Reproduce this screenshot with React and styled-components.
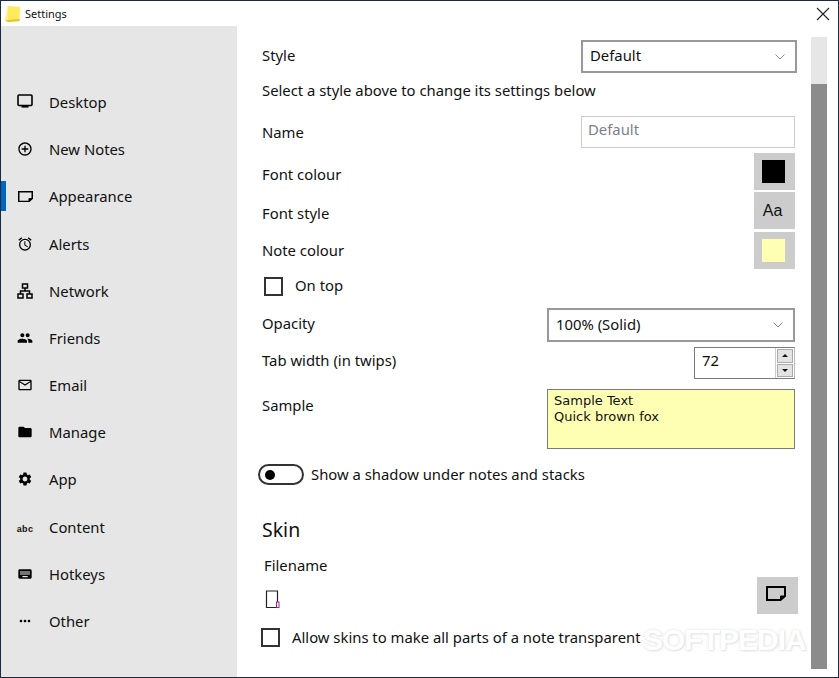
import React from "react";
import styled, { createGlobalStyle } from "styled-components";
import {
  MdAddCircleOutline, MdOutlineAlarm, MdPeople, MdMailOutline,
  MdFolder, MdSettings, MdKeyboard, MdMoreHoriz,
} from "react-icons/md";

const Global = createGlobalStyle`
  html, body { margin: 0; padding: 0; background: #fff; }
  body { font-family: "Noto Sans", "Open Sans", sans-serif; font-size: 14.85px; color: #111; }
`;

const Window = styled.div`
  position: relative; width: 839px; height: 678px; box-sizing: border-box;
  border: 1px solid #1b2a41; background: #fff;
  display: flex; flex-direction: column; overflow: hidden;
`;
const TitleBar = styled.header`
  height: 25px; flex: none; display: flex; align-items: center; padding-left: 3px; gap: 4px; font-size: 11px;
`;
const TitleText = styled.span`flex: 1;`;
const CloseButton = styled.span`
  width: 30px; display: flex; justify-content: center; color: #222; line-height: 0;
`;
const Body = styled.div`flex: 1; display: flex; min-height: 0;`;
const Sidebar = styled.nav`
  width: 236px; flex: none; background: #e6e6e6; padding-top: 52.4px; box-sizing: border-box;
  display: grid; grid-auto-rows: 47.2px; align-content: start;
`;
const NavItem = styled.div`
  position: relative; display: flex; align-items: center; padding-left: 16px; gap: 16px;
  ${p => p.$active && `
    &::before { content: ""; position: absolute; left: 0; top: 8px; width: 5px; height: 30px; background: #0067c0; }
  `}
`;
const NavIcon = styled.span`
  width: 16px; height: 18px; display: flex; align-items: center; justify-content: center; color: #000; font-size: 18px;
`;
const AbcGlyph = styled.span`
  font-family: "Liberation Sans", sans-serif; font-weight: 700; font-size: 9px; letter-spacing: 0.3px; line-height: 1; color: #111; margin-top: 5px;
`;
const Main = styled.main`flex: 1; display: flex; min-width: 0;`;
const Content = styled.div`
  flex: 1; padding: 14px 16px 0 25px; display: flex; flex-direction: column; min-width: 0;
`;
const Row = styled.div`
  display: flex; align-items: center; justify-content: space-between;
  height: ${p => p.$h}px; margin-top: ${p => p.$mt || 0}px; flex: none;
`;
const Label = styled.span`
  display: block; white-space: nowrap; margin-top: ${p => p.$nudge || 0}px;
`;
const TopLabel = styled(Label)`align-self: flex-start; margin-top: 6px;`;
const Select = styled.div`
  box-sizing: border-box; width: ${p => p.$w}px; height: 100%; border: 2px solid #999;
  margin-right: ${p => p.$over ? -2 : 0}px;
  display: flex; align-items: center; justify-content: space-between; padding: 0 10px 0 7px;
`;
const SelectText = styled.span`padding-bottom: 3px;`;
const TextInput = styled.div`
  box-sizing: border-box; width: 214px; height: 100%; border: 1px solid #ccc; color: #7a8088;
  padding: 0 0 6px 6px; display: flex; align-items: center;
`;
const SwatchButton = styled.div`
  box-sizing: border-box; width: 41px; height: 37px; background: #ccc; display: flex; align-items: center; justify-content: center;
  padding-right: ${p => p.$pr || 2}px;
  margin-right: ${p => p.$mr || 0}px;
`;
const Swatch = styled.div`width: 23px; height: 23px; background: ${p => p.$c};`;
const Aa = styled.span`font-family: "Liberation Sans", sans-serif; font-size: 16px; color: #111;`;
const CheckRow = styled.div`
  display: flex; align-items: center; height: 19px; margin-top: ${p => p.$mt}px; margin-left: ${p => p.$ml}px; gap: 12px; flex: none;
`;
const Check = styled.span`
  box-sizing: border-box; width: 19px; height: 19px; border: 2px solid #333; flex: none;
`;
const Spinner = styled.div`
  box-sizing: border-box; width: 101px; height: 100%; border: 1px solid #7a7a7a; border-right-color: #bbb;
  display: flex; justify-content: space-between; padding-left: 7px;
`;
const SpinValue = styled.span`align-self: center; padding-bottom: 6px;`;
const SpinButtons = styled.div`
  width: 16px; display: flex; flex-direction: column; gap: 1px; padding: 1px; background: #fff; border-left: 1px solid #ccc;
`;
const SpinButton = styled.div`
  flex: 1; background: #e3e3e3; border: 1px solid #aaa; display: flex; align-items: center; justify-content: center;
  &::after {
    content: ""; border-left: 3px solid transparent; border-right: 3px solid transparent;
    ${p => p.$up ? "border-bottom: 3px solid #111;" : "border-top: 3px solid #111;"}
  }
`;
const SampleBox = styled.div`
  box-sizing: border-box; width: 248px; height: 100%; background: #ffffb4; border: 1px solid #7a7a7a;
  padding: 3px 6px; font-family: "DejaVu Sans", sans-serif; font-size: 13px; line-height: 16px; color: #111;
`;
const ToggleRow = styled.div`
  display: flex; align-items: center; gap: 7px; height: 21px; margin-top: 15px; margin-left: -4px; flex: none;
`;
const Toggle = styled.span`
  box-sizing: border-box; width: 46px; height: 21px; border: 2px solid #333; border-radius: 11px; position: relative; flex: none;
  &::after { content: ""; position: absolute; left: 5px; top: 3.5px; width: 10px; height: 10px; border-radius: 50%; background: #000; }
`;
const Heading = styled.h2`
  margin: 30px 0 0; height: 30px; line-height: 30px; font-size: 19.5px; font-weight: 400; flex: none;
`;
const SubLabel = styled(Label)`margin: 8px 0 0 2px; height: 24px; line-height: 24px;`;
const SkinRow = styled.div`
  display: flex; align-items: center; justify-content: space-between; height: 37px; margin-left: 3px; flex: none;
`;
const FileSlot = styled.span`display: flex; margin-top: 7px;`;
const RaisedIcon = styled.span`display: flex; margin-bottom: 4px; color: #000;`;
const ScrollTrack = styled.div`
  width: 16px; margin: 11px 11px 8px 0; background: #e6e6e6; flex: none; padding-top: 47px; box-sizing: border-box; display: flex;
`;
const ScrollThumb = styled.div`flex: 1; background: #8c8c8c;`;
const Watermark = styled.div`
  position: absolute; left: 642px; top: 622px; font-family: "Liberation Sans", sans-serif; font-weight: 700; font-size: 30px; letter-spacing: -1px;
  color: #fff; text-shadow: 0 0 3px #dedede, 1px 1px 2px #e6e6e6; pointer-events: none;
`;

const Chevron = () => (
  <svg width="10" height="6" viewBox="0 0 10 6" fill="none" stroke="#8a8a8a" strokeWidth="1">
    <path d="M0.5 0.5 L5 5 L9.5 0.5" />
  </svg>
);
const CloseIcon = () => (
  <svg width="14" height="14" viewBox="0 0 14 14" fill="none" stroke="#222" strokeWidth="1.1">
    <path d="M1 1 L13 13 M13 1 L1 13" />
  </svg>
);
const StickyLogo = () => (
  <svg width="17" height="18" viewBox="0 0 17 18">
    <path d="M4 1 L16 2 L15.5 16 L4 17 L1 15 Z" fill="#ffe95c" />
    <path d="M1 15 L4 17 L15.5 16 L15.6 14 L4 15 Z" fill="#e5c52e" />
    <path d="M4 1 L1 15 L4 15 Z" fill="#fff38a" />
  </svg>
);
const NoteIcon = ({ size = 15 }) => (
  <svg width={size} height={size * 0.75} viewBox="0 0 20 15" fill="none" stroke="currentColor" strokeWidth="2">
    <path d="M1 1 H19 V10 L14.5 14 H1 Z" />
    <path d="M14.5 14 V10 H19 Z" fill="currentColor" strokeWidth="1" />
  </svg>
);
const MonitorIcon = () => (
  <svg width="16" height="15" viewBox="0 0 16 15" fill="none" stroke="currentColor">
    <rect x="1" y="1" width="14" height="10.5" rx="1" strokeWidth="1.6" />
    <rect x="4.5" y="12" width="7" height="1.6" fill="currentColor" strokeWidth="0" />
  </svg>
);
const NetworkIcon = () => (
  <svg width="16" height="16" viewBox="0 0 16 16" fill="none" stroke="currentColor" strokeWidth="1.5">
    <rect x="5.5" y="1" width="5" height="4" />
    <rect x="1" y="11" width="5" height="4" />
    <rect x="10" y="11" width="5" height="4" />
    <path d="M8 5 V8 M3.5 11 V8 H12.5 V11" />
  </svg>
);
const FileIcon = () => (
  <svg width="15" height="19" viewBox="0 0 15 19" fill="none">
    <path d="M1.5 1 H12.5 V17.5 H1.5 Z" stroke="#222" strokeWidth="1.2" />
    <rect x="11.5" y="12" width="2.5" height="5.5" stroke="#a02090" strokeWidth="1" fill="#fff" />
  </svg>
);

const navItems = [
  ["Desktop", <MonitorIcon />],
  ["New Notes", <MdAddCircleOutline />],
  ["Appearance", <NoteIcon />, true],
  ["Alerts", <MdOutlineAlarm />],
  ["Network", <NetworkIcon />],
  ["Friends", <MdPeople />],
  ["Email", <MdMailOutline />],
  ["Manage", <MdFolder />],
  ["App", <MdSettings />],
  ["Content", <AbcGlyph>abc</AbcGlyph>],
  ["Hotkeys", <MdKeyboard />],
  ["Other", <MdMoreHoriz />],
];

export default function App() {
  return (
    <Window>
      <Global />
      <TitleBar>
        <StickyLogo />
        <TitleText>Settings</TitleText>
        <CloseButton><CloseIcon /></CloseButton>
      </TitleBar>
      <Body>
        <Sidebar>
          {navItems.map(([name, icon, active]) => (
            <NavItem key={name} $active={active}>
              <NavIcon>{icon}</NavIcon>
              <span>{name}</span>
            </NavItem>
          ))}
        </Sidebar>
        <Main>
          <Content>
            <Row $h={33}>
              <Label $nudge={-4}>Style</Label>
              <Select $w={216} $over><SelectText>Default</SelectText><Chevron /></Select>
            </Row>
            <Row $h={34}><Label>Select a style above to change its settings below</Label></Row>
            <Row $h={32} $mt={9}>
              <Label>Name</Label>
              <TextInput>Default</TextInput>
            </Row>
            <Row $h={37} $mt={5}>
              <Label $nudge={4}>Font colour</Label>
              <SwatchButton><Swatch $c="#000" /></SwatchButton>
            </Row>
            <Row $h={37} $mt={2}>
              <Label $nudge={4}>Font style</Label>
              <SwatchButton $pr={4}><Aa>Aa</Aa></SwatchButton>
            </Row>
            <Row $h={37} $mt={3}>
              <Label $nudge={-2}>Note colour</Label>
              <SwatchButton><Swatch $c="#ffffb4" /></SwatchButton>
            </Row>
            <CheckRow $mt={8} $ml={2}>
              <Check /><Label $nudge={-4}>On top</Label>
            </CheckRow>
            <Row $h={34} $mt={12}>
              <Label $nudge={-4}>Opacity</Label>
              <Select $w={248}><SelectText>100% (Solid)</SelectText><Chevron /></Select>
            </Row>
            <Row $h={32} $mt={5}>
              <Label $nudge={-6}>Tab width (in twips)</Label>
              <Spinner>
                <SpinValue>72</SpinValue>
                <SpinButtons><SpinButton $up /><SpinButton /></SpinButtons>
              </Spinner>
            </Row>
            <Row $h={60} $mt={10}>
              <TopLabel>Sample</TopLabel>
              <SampleBox>Sample Text<br />Quick brown fox</SampleBox>
            </Row>
            <ToggleRow>
              <Toggle /><Label $nudge={-2}>Show a shadow under notes and stacks</Label>
            </ToggleRow>
            <Heading>Skin</Heading>
            <SubLabel>Filename</SubLabel>
            <SkinRow>
              <FileSlot><FileIcon /></FileSlot>
              <SwatchButton $mr={-3} $pr={3}><RaisedIcon><NoteIcon size={20} /></RaisedIcon></SwatchButton>
            </SkinRow>
            <CheckRow $mt={14} $ml={-1}>
              <Check /><Label $nudge={-2}>Allow skins to make all parts of a note transparent</Label>
            </CheckRow>
          </Content>
          <ScrollTrack><ScrollThumb /></ScrollTrack>
        </Main>
      </Body>
      <Watermark>SOFTPEDIA</Watermark>
    </Window>
  );
}
